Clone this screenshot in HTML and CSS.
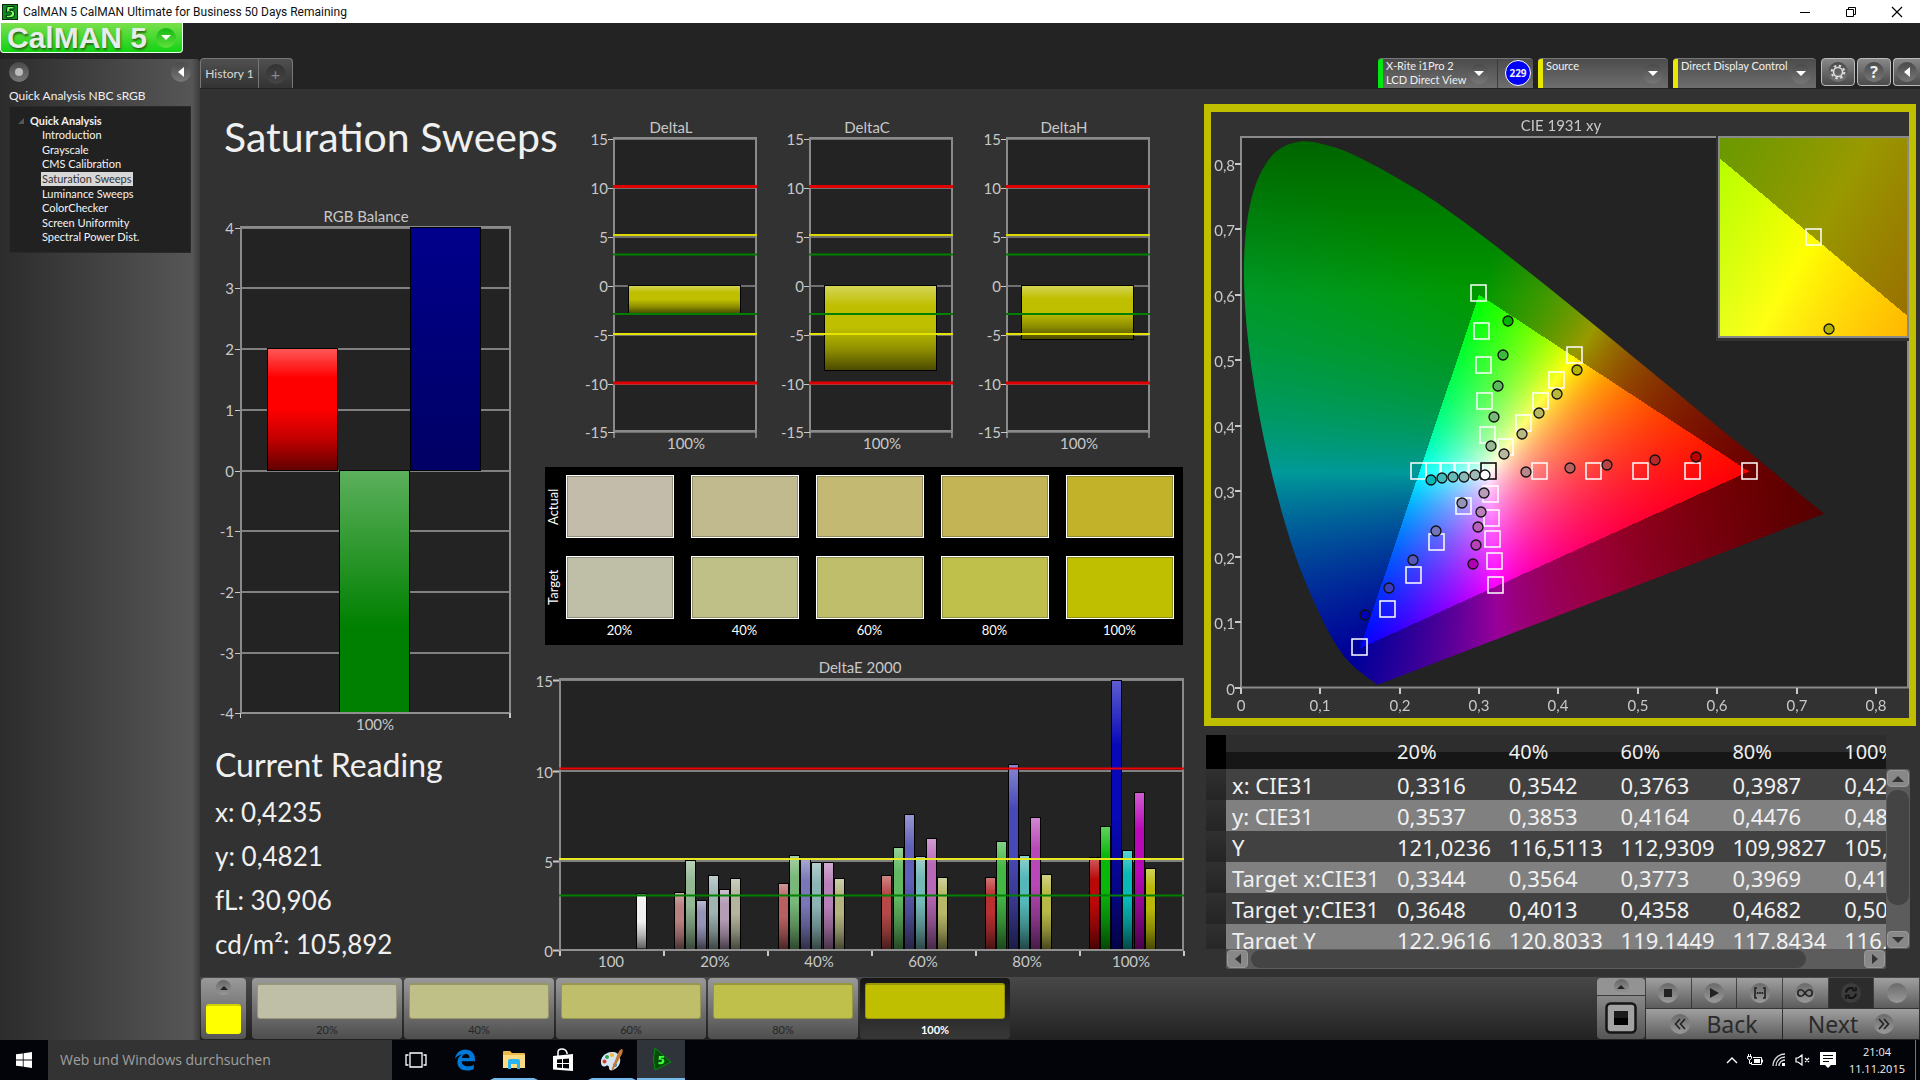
FILE: index.html
```html
<!DOCTYPE html>
<html lang="en">
<head>
<meta charset="utf-8">
<title>CalMAN 5 CalMAN Ultimate for Business</title>
<link rel="stylesheet" href="styles.css">
</head>
<body>
<header class="titlebar">
  <svg class="app-icon" width="16" height="16" viewBox="0 0 16 16"><rect width="16" height="16" fill="#0a2a0a"/><rect x="1" y="1" width="14" height="14" fill="#0c8c1c"/><path d="M12 2.500H5L4.300 8.500q4.200-1.800 5.200.500q.3 2.800-5.200 2.200v2.500q8.400 1 8.400-4.200q-.5-3.800-5-3.200l.2-1.300H12z" fill="#7dff5c" stroke="#021" stroke-width="1"/></svg>
  <span class="title-text">CalMAN 5 CalMAN Ultimate for Business 50 Days Remaining</span>
  <div class="window-buttons">
    <button aria-label="Minimize"><svg width="12" height="12" viewBox="0 0 12 12"><path d="M1 6.500h10" stroke="#000"/></svg></button>
    <button aria-label="Restore"><svg width="12" height="12" viewBox="0 0 12 12" fill="none" stroke="#000"><path d="M1.500 3.500h7v7h-7zM3.500 3.500v-2h7v7h-2"/></svg></button>
    <button aria-label="Close"><svg width="12" height="12" viewBox="0 0 12 12"><path d="M1 1l10 10M11 1L1 11" stroke="#000" stroke-width="1.200"/></svg></button>
  </div>
</header>

<div class="app">
  <div class="left">
    <button class="logo"><span>CalMAN 5</span><i class="round green"><b class="tri down"></b></i></button>
    <nav class="sidebar">
      <div class="side-top">
        <button class="round knob" aria-label="Pin"><i></i></button>
        <button class="round" aria-label="Collapse"><b class="tri left-tri"></b></button>
      </div>
      <h2>Quick Analysis NBC sRGB</h2>
      <div class="tree">
        <div class="tree-head"><svg width="6" height="6" viewBox="0 0 6 6"><path d="M6 0v6H0z" fill="#555"/></svg>Quick Analysis</div>
        <ul>
          <li><a href="#">Introduction</a></li>
          <li><a href="#">Grayscale</a></li>
          <li><a href="#">CMS Calibration</a></li>
          <li><a href="#" class="selected">Saturation Sweeps</a></li>
          <li><a href="#">Luminance Sweeps</a></li>
          <li><a href="#">ColorChecker</a></li>
          <li><a href="#">Screen Uniformity</a></li>
          <li><a href="#">Spectral Power Dist.</a></li>
        </ul>
      </div>
    </nav>
  </div>

  <div class="main">
    <div class="topbar">
      <div class="tabs">
        <button class="tab">History 1</button>
        <button class="tab add" aria-label="Add tab"><i class="round dim">+</i></button>
      </div>
      <div class="devices">
        <button class="device meter"><span class="strip on"></span><span class="dev-label">X-Rite i1Pro 2<br>LCD Direct View</span><i class="round"><b class="tri down"></b></i><span class="badge-cell"><span class="badge">229</span></span></button>
        <button class="device source"><span class="strip"></span><span class="dev-label">Source</span><i class="round"><b class="tri down"></b></i></button>
        <button class="device display"><span class="strip"></span><span class="dev-label">Direct Display Control</span><i class="round"><b class="tri down"></b></i></button>
        <button class="tool" aria-label="Settings"><i class="round"><svg width="16" height="16" viewBox="0 0 16 16" fill="none" stroke="#ddd"><circle cx="8" cy="8" r="4.500" stroke-width="1.600"/><circle cx="8" cy="8" r="6.300" stroke-width="2" stroke-dasharray="2.400 2.550"/></svg></i></button>
        <button class="tool" aria-label="Help"><i class="round">?</i></button>
        <button class="tool cut" aria-label="Collapse panel"><i class="round"><b class="tri left-tri"></b></i></button>
      </div>
    </div>

    <main class="workspace">
      <h1>Saturation Sweeps</h1>
      <svg class="chart rgb" id="rgb" viewBox="200 200 336 540"></svg>
      <section class="reading">
        <h2>Current Reading</h2>
        <p>x: 0,4235</p><p>y: 0,4821</p><p>fL: 30,906</p><p>cd/m²: 105,892</p>
      </section>
      <svg class="chart deltas" id="deltas" viewBox="536 89 654 372"></svg>
      <section class="swatches">
        <span class="side">Actual</span>
        <i class="a20"></i><i class="a40"></i><i class="a60"></i><i class="a80"></i><i class="a100"></i>
        <span class="side">Target</span>
        <i class="t20"></i><i class="t40"></i><i class="t60"></i><i class="t80"></i><i class="t100"></i>
        <span></span><span>20%</span><span>40%</span><span>60%</span><span>80%</span><span>100%</span>
      </section>
      <svg class="chart de" id="de" viewBox="536 655 654 322"></svg>
      <section class="right">
        <div class="cie">
          <canvas id="gamut" width="698" height="606"></canvas>
          <svg id="cie" viewBox="1211 112 698 606"></svg>
        </div>
        <div class="grid-box">
          <div class="table-clip">
            <table>
              <colgroup><col class="c-handle"><col class="c-name"><col><col><col><col><col></colgroup>
              <thead><tr><td></td><th></th><th>20%</th><th>40%</th><th>60%</th><th>80%</th><th>100%</th></tr></thead>
              <tbody>
                <tr><td></td><th>x: CIE31</th><td>0,3316</td><td>0,3542</td><td>0,3763</td><td>0,3987</td><td>0,4235</td></tr>
                <tr><td></td><th>y: CIE31</th><td>0,3537</td><td>0,3853</td><td>0,4164</td><td>0,4476</td><td>0,4821</td></tr>
                <tr><td></td><th>Y</th><td>121,0236</td><td>116,5113</td><td>112,9309</td><td>109,9827</td><td>105,</td></tr>
                <tr><td></td><th>Target x:CIE31</th><td>0,3344</td><td>0,3564</td><td>0,3773</td><td>0,3969</td><td>0,41</td></tr>
                <tr><td></td><th>Target y:CIE31</th><td>0,3648</td><td>0,4013</td><td>0,4358</td><td>0,4682</td><td>0,50</td></tr>
                <tr><td></td><th>Target Y</th><td>122,9616</td><td>120,8033</td><td>119,1449</td><td>117,8434</td><td>116,</td></tr>
              </tbody>
            </table>
          </div>
          <div class="scroll vertical"><button aria-label="Up"><b class="tri up"></b></button><i></i><button aria-label="Down"><b class="tri down"></b></button></div>
          <div class="scroll horizontal"><button aria-label="Left"><b class="tri left-tri"></b></button><i></i><button aria-label="Right"><b class="tri right-tri"></b></button></div>
        </div>
      </section>
    </main>

    <footer class="bottombar">
      <button class="mini" aria-label="Current color"><i class="round tiny"><b class="tri up"></b></i><span></span></button>
      <div class="steps">
        <button><i class="t20"></i>20%</button>
        <button><i class="t40"></i>40%</button>
        <button><i class="t60"></i>60%</button>
        <button><i class="t80"></i>80%</button>
        <button class="active"><i class="t100"></i>100%</button>
      </div>
      <div class="pattern">
        <button aria-label="Expand"><i class="round tiny"><b class="tri up"></b></i></button>
        <button aria-label="Pattern"><svg width="32" height="32" viewBox="0 0 32 32"><rect x="1.500" y="1.500" width="29" height="29" rx="4" fill="#a2a2a2" stroke="#151515" stroke-width="2.500"/><path d="M9 9h14v14H9z" fill="#000"/><path d="M9 9h14v7H9z" fill="#1c1c1c"/></svg></button>
      </div>
      <div class="transport">
        <button aria-label="Stop"><i class="round"><svg width="10" height="10"><path d="M1 1h8v8H1z" fill="#222"/></svg></i></button>
        <button aria-label="Play"><i class="round"><svg width="10" height="10"><path d="M1 0l9 5-9 5z" fill="#222"/></svg></i></button>
        <button aria-label="Series"><i class="round"><svg width="14" height="12" viewBox="0 0 14 12" fill="none" stroke="#222" stroke-width="1.600"><path d="M4 1H2v10h2M10 1h2v10h-2"/><path d="M3.800 6h1.600M6.200 6h1.600M8.600 6h1.600" stroke-width="2"/></svg></i></button>
        <button aria-label="Loop"><i class="round"><svg width="16" height="10" viewBox="0 0 16 10" fill="none" stroke="#222" stroke-width="1.600"><path d="M8 5C6 2 5 1.800 4 1.800a3.200 3.200 0 0 0 0 6.400c1 0 2-.200 4-3.200s3-3.200 4-3.200a3.200 3.200 0 0 1 0 6.400c-1 0-2-.200-4-3.200z"/></svg></i></button>
        <button class="pressed" aria-label="Refresh"><i class="round"><svg width="14" height="14" viewBox="0 0 14 14" fill="none" stroke="#111" stroke-width="2"><path d="M2 6.500a5 5 0 0 1 8-3.500M12 7.500a5 5 0 0 1-8 3.500"/><path d="M8 4.500h4V1M6 9.500H2V13" stroke-width="1.500"/></svg></i></button>
        <button aria-label="Record"><i class="round"></i></button>
        <button class="wide"><i class="round"><svg width="12" height="12" viewBox="0 0 12 12" fill="none" stroke="#222" stroke-width="1.600"><path d="M6 1L1.500 6 6 11M11 1L6.500 6 11 11"/></svg></i>Back</button>
        <button class="wide">Next<i class="round"><svg width="12" height="12" viewBox="0 0 12 12" fill="none" stroke="#222" stroke-width="1.600"><path d="M1 1l4.500 5L1 11M6 1l4.500 5L6 11"/></svg></i></button>
      </div>
    </footer>
  </div>
</div>

<footer class="taskbar">
  <button class="start" aria-label="Start"><svg width="16" height="16" viewBox="0 0 16 16" fill="#fff"><path d="M0 2.300L6.800 1.400v6.200H0zM7.600 1.300L16 0v7.600H7.600zM0 8.400h6.800v6.200L0 13.700zM7.600 8.400H16V16l-8.400-1.300z"/></svg></button>
  <input class="search" type="text" aria-label="Search" placeholder="Web und Windows durchsuchen">
  <div class="tasks">
    <button aria-label="Task view"><svg width="22" height="16" viewBox="0 0 22 16" fill="none" stroke="#fff" stroke-width="1.300"><path d="M5 1h12v14H5zM3.500 3H1v10h2.500M18.500 3H21v10h-2.500"/></svg></button>
    <button aria-label="Edge"><svg width="22" height="22" viewBox="0 0 22 22"><path d="M1 9.800C1.800 4 6 .5 11.200.5 17 .5 21 4.600 21 10v2.300H7.700c.1 3.600 3 5 6.200 5 2.200 0 4.300-.6 5.900-1.600v4.200c-2 1.100-4.300 1.600-6.800 1.600-6 0-9.600-3.300-9.600-8.500 0-3.200 1.800-5.900 4.800-7.400C4.800 6 2.500 7.500 1 9.800zM7.900 9h7.600c0-2.700-1.400-4.100-3.600-4.100C9.700 4.900 8.200 6.500 7.900 9z" fill="#0078d7"/></svg></button>
    <button class="open" aria-label="Explorer"><svg width="22" height="20" viewBox="0 0 22 20"><path d="M0 2q0-1 1-1h6l2 2h12q1 0 1 1v14H0z" fill="#e9b949"/><path d="M0 5h22v13H0z" fill="#fbdc83"/><path d="M5 19v-8q0-2 2-2h8q2 0 2 2v8h-3v-5H8v5z" fill="#29b3f2"/></svg></button>
    <button aria-label="Store"><svg width="22" height="24" viewBox="0 0 22 24"><path d="M1 8l20-2v17L1 21.500z" fill="#fff"/><path d="M6 8V4q0-3 4-3t5 4v1" fill="none" stroke="#fff" stroke-width="1.500"/><path d="M5 11.500l5-.5v4H5zM11 11l6-.6V15h-6zM5 16h5v4l-5-.4zM11 16h6v4.600l-6-.6z" fill="#03050a"/></svg></button>
    <button class="open" aria-label="Paint"><svg width="24" height="24" viewBox="0 0 24 24"><path d="M11 4C4 5 .5 10 1 15c.5 4 3 4 5 3 2-1 3 0 3 2 0 3 3 3 6 1 4-2 6-7 5-11-1-5-5-6.500-9-6z" fill="#d5e6f3"/><circle cx="7" cy="9" r="2" fill="#2fa84f"/><circle cx="12" cy="7" r="2" fill="#f2b92b"/><circle cx="4.500" cy="13.500" r="2" fill="#dc3c2c"/><circle cx="15" cy="17" r="2" fill="#357fd1"/><path d="M22 1q1.500 1 0 5L13 22l-1.500-.5L18 5q2-4 4-4z" fill="#c27a35"/></svg></button>
    <button class="open current" aria-label="CalMAN"><svg width="22" height="24" viewBox="0 0 22 24"><path d="M5 1l16 14-16 8q-3-11 0-22z" fill="#064d0a" stroke="#0a8c16"/><path d="M14 9H9l-.4 4q3-1 3.500.6 0 2-3.700 1.400v2q6 1 6-3.200-.5-2.500-3.500-2.200l.1-.8h3z" fill="#3dff3d"/></svg></button>
  </div>
  <div class="tray">
    <svg width="12" height="8" viewBox="0 0 12 8" fill="none" stroke="#fff" stroke-width="1.400"><path d="M1 7l5-5 5 5"/></svg>
    <svg width="16" height="12" viewBox="0 0 16 12" fill="none" stroke="#fff"><path d="M6 3.500h8.500v7h-10V8M15.500 5.500v3M1.500 0v2.500M3.500 0v2.500M.5 2.500h4v2l-2 1.500-2-1.500zM2.500 6v3.500h2"/><path d="M7 5h6v4H7z" fill="#fff" stroke="none"/></svg>
    <svg width="14" height="14" viewBox="0 0 14 14" fill="none" stroke="#ddd" stroke-width="1.300"><path d="M1 13A12 12 0 0 1 13 1M4 13a9 9 0 0 1 9-9M7 13a6 6 0 0 1 6-6"/><path d="M10 10h3v3h-3z" fill="#fff" stroke="none"/></svg>
    <svg width="16" height="12" viewBox="0 0 16 12" fill="none" stroke="#fff" stroke-width="1.200"><path d="M1 4h2l4-3v10L3 8H1zM10 4l4 4M14 4l-4 4"/></svg>
    <svg width="16" height="16" viewBox="0 0 16 16"><path d="M0 0h16v13h-5l-3 3-3-3H0z" fill="#fff"/><path d="M3 3.500h10M3 6.500h10M3 9.500h6" stroke="#03050a" stroke-width="1.200"/></svg>
    <time>21:04<br>11.11.2015</time>
    <span class="desk-line"></span>
  </div>
</footer>
<script src="charts.js"></script>
</body>
</html>
```
FILE: styles.css
```css
* { box-sizing: border-box; }
html, body { height: 100%; }
body {
  margin: 0;
  display: flex;
  flex-direction: column;
  overflow: hidden;
  background: #232323;
  color: #f0f0f0;
  font: 13px/15px Lato, "Liberation Sans", sans-serif;
}
button {
  margin: 0;
  padding: 0;
  border: 0;
  background: none;
  color: inherit;
  font: inherit;
  display: flex;
  align-items: center;
  justify-content: center;
}
h1, h2, p, ul { margin: 0; padding: 0; font-weight: 400; list-style: none; }

/* Title bar */
.titlebar {
  flex: 0 0 23px;
  display: flex;
  align-items: center;
  gap: 5px;
  padding-left: 2px;
  background: #fff;
  color: #111;
  font: 12px/22px Roboto, "Noto Sans", sans-serif;
}
.window-buttons { margin-left: auto; display: flex; }
.window-buttons button { width: 46px; height: 22px; }

/* Shared bits */
.round {
  width: 20px;
  height: 20px;
  flex: none;
  border-radius: 50%;
  background: linear-gradient(#4a4a4a, #777);
  display: inline-flex;
  align-items: center;
  justify-content: center;
  font-style: normal;
}
.round.green { background: linear-gradient(#14b814, #60e03c); }
.round.dim { background: linear-gradient(#333, #454545); color: #888; font-size: 16px; }
.round.tiny { width: 15px; height: 15px; background: linear-gradient(#666, #999); }
.round.tiny .tri { color: #222; }
.tri { width: 0; height: 0; color: #fff; border: 5px solid transparent; }
.tri.down { border-top-color: currentColor; border-bottom: 0; }
.tri.up { border-bottom-color: currentColor; border-top: 0; border-width: 4px; border-top: 0; }
.tri.left-tri { border-right: 6px solid currentColor; border-left: 0; }
.tri.right-tri { border-left: 6px solid currentColor; border-right: 0; }

.app { flex: 1; min-height: 0; display: flex; }

/* Left side */
.left { flex: 0 0 200px; display: flex; flex-direction: column; gap: 6px; }
.logo {
  align-self: flex-start;
  width: 183px;
  height: 30px;
  gap: 9px;
  border: 1px solid #e8ffe8;
  border-top: 0;
  border-radius: 0 0 4px 4px;
  background: linear-gradient(#7be04c, #12d212);
  color: #e8ece8;
  font: bold 30px/28px "Liberation Sans", Arial, sans-serif;
  text-shadow: 1px 2px 2px #2a6a1a;
}
.sidebar {
  flex: 1;
  padding: 3px 9px 0 9px;
  border-radius: 0 4px 0 0;
  background: linear-gradient(90deg, #2c2c2c, #565656 96%, #3c3c3c);
}
.side-top { display: flex; justify-content: space-between; }
.knob i { width: 8px; height: 8px; border-radius: 50%; background: #bbb; }
.sidebar h2 { font-size: 13px; line-height: 18px; margin: 5px 0 1px; }
.sidebar h2, .tab, .device { font-size: 12px; }
.tree {
  height: 147px;
  padding: 6px 0 0 8px;
  background: #212121;
  border: 1px solid #2a2a2a;
  font-size: 11px;
}
.tree-head { display: flex; align-items: center; gap: 6px; font-weight: 700; line-height: 15px; }
.tree ul { height: 117px; display: grid; grid-auto-rows: 1fr; padding-left: 23px; }
.tree a { color: #f4f4f4; text-decoration: none; display: block; width: fit-content; padding: 0 1px; line-height: 14px; }
.tree a.selected { background: #d8d8d8; color: #333; }

/* Main */
.main { flex: 1; min-width: 0; display: flex; flex-direction: column; }
.topbar { flex: 0 0 66px; display: flex; justify-content: space-between; align-items: flex-end; padding-bottom: 1px; overflow: hidden; }
.tabs { display: flex; }
.tab {
  height: 30px;
  border: 1px solid #777;
  border-bottom: 0;
  border-radius: 4px 0 0 0;
  background: linear-gradient(#505050, #333);
  color: #d8d8d8;
  width: 59px;
  white-space: nowrap;
}
.tab.add { width: 34px; border-left: 0; border-radius: 0 4px 0 0; }
.devices { display: flex; gap: 5px; }
.device {
  height: 30px;
  align-items: stretch;
  justify-content: flex-start;
  border-top: 1px solid #777;
  border-radius: 4px 4px 0 0;
  background: linear-gradient(#4c4c4c, #6e6e6e);
  text-align: left;
  font-size: 11px;
  line-height: 14px;
  padding-right: 5px;
  white-space: nowrap;
}
.device .round { align-self: center; }
.device.meter { width: 155px; padding-right: 2px; }
.device.source { width: 130px; }
.device.display { width: 143px; }
.strip { flex: 0 0 5px; background: #e8e800; margin-right: 3px; border-radius: 3px 0 0 0; }
.strip.on { background: #00e810; }
.dev-label { flex: 1; min-width: 0; }
.badge-cell { margin-left: 8px; padding: 1px 0 0 7px; border-left: 1px solid #3c3c3c; }
.badge {
  display: block;
  width: 26px;
  height: 26px;
  border: 1px solid #fff;
  border-radius: 50%;
  background: #0000fa;
  font: bold 10px/24px "Open Sans", sans-serif;
  text-align: center;
}
.tool {
  width: 34px;
  height: 28px;
  margin-right: -3px;
  border: 1px solid #bbb;
  border-radius: 4px;
  background: linear-gradient(#888, #4a4a4a);
  font: bold 16px/20px "Open Sans", sans-serif;
}
.tool.cut { width: 27px; margin-right: 0; border-right: 0; border-radius: 4px 0 0 4px; }

.workspace {
  flex: 1;
  min-height: 0;
  display: grid;
  grid-template-columns: 336fr 40fr 614fr 730fr;
  grid-template-rows: 111fr 261fr 194fr 85fr 237fr;
  background: #323232;
}
.workspace > * { min-width: 0; min-height: 0; }
.chart { width: 100%; height: 100%; }
.workspace h1 { grid-area: 1 / 1 / 2 / 3; padding: 22px 0 0 24px; font-size: 41px; line-height: 52px; white-space: nowrap; }
.rgb { grid-area: 2 / 1 / 5 / 2; }
.reading { grid-area: 5 / 1 / 6 / 2; padding: 5px 0 0 15px; }
.reading h2 { font-size: 32px; line-height: 40px; margin-bottom: 5px; }
.reading p { font-size: 26px; line-height: 44px; }
.deltas { grid-area: 1 / 2 / 3 / 4; }
.de { grid-area: 4 / 2 / 6 / 4; }
.swatches {
  grid-area: 3 / 2 / 4 / 4;
  margin: 6px 7px 10px 9px;
  padding: 8px 1px 0 0;
  background: #000;
  display: grid;
  grid-template-columns: 12px repeat(5, 1fr);
  grid-template-rows: 63px 63px 14px;
  row-gap: 18px;
  text-align: center;
  color: #fff;
}
.swatches .side { writing-mode: vertical-rl; rotate: 180deg; line-height: 16px; }
.swatches i { margin: 0 8px 0 9px; border: 1px solid #fff; box-shadow: inset 0 0 0 1px rgba(80, 80, 60, .4); }
.swatches span:nth-child(n+13) { margin-top: -14px; line-height: 14px; }
.a20 { background: #c3bcaa; } .a40 { background: #c2ba8f; } .a60 { background: #c3b973; } .a80 { background: #c3b555; } .a100 { background: #c2b229; }
.t20 { background: #bfbfa7; } .t40 { background: #bfbf88; } .t60 { background: #bfbf6b; } .t80 { background: #bfbf4b; } .t100 { background: #bfbf00; }

.right { grid-area: 1 / 4 / 6 / 5; padding: 15px 4px 8px 14px; display: flex; flex-direction: column; gap: 9px; }
.cie { flex: 1; min-height: 0; border: solid #bfbf00; border-width: 8px 7px; display: grid; grid-template: minmax(0, 1fr) / minmax(0, 1fr); }
.cie > * { grid-area: 1 / 1; width: 100%; height: 100%; object-fit: contain; }

svg text { font-family: Lato, "Liberation Sans", sans-serif; font-size: 15px; fill: #c8c8c8; }

/* Data table */
.grid-box { flex: 0 0 234px; margin: 0 6px 0 2px; display: grid; grid-template: 34px 180px 20px / 20px minmax(0, 1fr) 24px; }
.table-clip { grid-area: 1 / 1 / 3 / 3; overflow: hidden; }
table { table-layout: fixed; width: 744px; border-collapse: collapse; font: 22px/30px "Noto Sans", "Open Sans", sans-serif; }
.c-handle { width: 20px; }
.c-name { width: 165px; }
th, td { padding: 0 0 0 6px; text-align: left; font-weight: 400; white-space: nowrap; height: 31px; }
thead th { height: 34px; font-size: 20px; background: linear-gradient(#2d2d2d 50%, #161616 50%); }
thead td { background: #000; }
tbody tr { background: #414141; }
tbody tr:nth-child(even) { background: #808080; }
tbody td:first-child { background: linear-gradient(#303030, #242424); }
.scroll { display: flex; background: #5c5c5c; border-radius: 3px; padding: 1px; gap: 3px; }
.scroll i { background: #444; border-radius: 10px; }
.scroll button { flex: none; background: #888; border: 1px solid #999; border-radius: 4px; }
.scroll .tri { color: #333; }
.vertical { grid-area: 2 / 3; flex-direction: column; justify-content: space-between; }
.vertical button { height: 17px; }
.vertical .tri { border-width: 6px; }
.vertical .up { border-top: 0; }
.vertical .down { border-bottom: 0; }
.vertical i { flex: 0 0 115px; margin-bottom: auto; }
.horizontal { grid-area: 3 / 2; }
.horizontal button { width: 21px; }
.horizontal i { flex: 0 0 555px; margin-right: auto; }

/* Bottom bar */
.bottombar { flex: 0 0 63px; padding: 1px; display: flex; background: linear-gradient(#484848, #222); }
.mini { width: 45px; flex-direction: column; justify-content: space-between; padding: 2px 5px 5px; border-radius: 4px; background: linear-gradient(#999, #555); }
.mini span { width: 35px; height: 30px; border-radius: 3px; background: #ff0; border-top: 2px solid #d2d200; }
.steps { display: flex; gap: 2px; margin-left: 6px; }
.steps button {
  width: 150px;
  flex-direction: column;
  justify-content: flex-start;
  gap: 3px;
  padding: 5px 5px 0;
  border-radius: 4px;
  background: linear-gradient(#999, #4e4e4e);
  color: #262626;
  font-size: 11px;
}
.steps i { width: 100%; height: 36px; border-radius: 3px; border: 1px solid rgba(60, 60, 30, .3); border-top-width: 2px; flex: none; }
.steps .active { background: linear-gradient(#161616, #383838); color: #fff; font-weight: 700; }
.pattern { margin-left: auto; width: 48px; display: flex; flex-direction: column; gap: 1px; }
.pattern button { height: 17px; border-radius: 4px 4px 0 0; background: #939393; }
.pattern button + button { flex: 1; border-radius: 0 0 4px 4px; background: linear-gradient(#888, #555); }
.transport { margin-left: 1px; width: 273px; display: grid; grid-template-columns: repeat(6, 1fr); gap: 1px; }
.transport button { height: 30px; background: linear-gradient(#a0a0a0, #5c5c5c); color: #2a2a2a; }
.transport .round { background: linear-gradient(#6a6a6a, #9a9a9a); }
.transport .pressed { background: #2c2c2c; }
.transport .pressed .round { background: #3c3c3c; }
.transport .wide { grid-column: span 3; gap: 16px; font: 23px/28px "Noto Sans", sans-serif; }

/* Taskbar */
.taskbar { flex: 0 0 40px; display: flex; background: #02040a; font: 11px/17px "Open Sans", "Noto Sans", sans-serif; }
.start { width: 48px; }
.search { width: 344px; border: 0; padding: 0 12px; background: #333; color: #aaa; font: 14px/20px "Open Sans", sans-serif; }
.search::placeholder { color: #a0a0a0; opacity: 1; }
.tasks { display: flex; gap: 1px; }
.tasks button { width: 48px; border: solid transparent; border-width: 2px 4px; }
.tasks .open { border-bottom-color: #76b9ed; }
.tasks .current { border-left: 0; border-right: 0; border-top: 0; background: #2f343a; }
.tray { margin-left: auto; display: flex; align-items: center; gap: 9px; }
.tray time { text-align: center; margin: 0 1px 0 4px; }
.desk-line { width: 5px; height: 40px; border-left: 1px solid #777; }
```
FILE: charts.js
```javascript
const NS = 'http://www.w3.org/2000/svg';

function add(parent, name, attrs, text) {
  const el = document.createElementNS(NS, name);
  for (const key in attrs) el.setAttribute(key, attrs[key]);
  if (text !== undefined) el.textContent = text;
  parent.appendChild(el);
  return el;
}
function line(svg, x1, y1, x2, y2, stroke, width = 2) {
  add(svg, 'line', { x1, y1, x2, y2, stroke, 'stroke-width': width });
}
function label(svg, x, y, text, anchor = 'middle') {
  add(svg, 'text', { x, y, 'text-anchor': anchor }, text);
}

let gradientCount = 0;
function gradient(svg, stops) {
  const id = 'g' + (++gradientCount);
  const g = add(svg, 'linearGradient', { id, x1: 0, y1: 0, x2: 0, y2: 1 });
  stops.forEach(([offset, color]) => add(g, 'stop', { offset, 'stop-color': color }));
  return `url(#${id})`;
}
function mix(hex, target, t) {
  const n = parseInt(hex.slice(1), 16);
  const c = [n >> 16, (n >> 8) & 255, n & 255].map(v => Math.round(v + (target - v) * t));
  return `rgb(${c})`;
}
function glossy(svg, color) {
  return gradient(svg, [[0, mix(color, 255, 0.35)], [0.24, color], [0.5, color], [0.75, mix(color, 0, 0.25)], [1, mix(color, 0, 0.62)]]);
}
function bar(svg, x, y, w, h, fill) {
  add(svg, 'rect', { x, y, width: w, height: h, fill, stroke: '#000', 'stroke-width': 1 });
}
function frame(svg, x, y, w, h) {
  add(svg, 'rect', { x, y, width: w, height: h, fill: 'none', stroke: '#8a8a8a', 'stroke-width': 2 });
}

// RGB balance
(function () {
  const svg = document.getElementById('rgb');
  add(svg, 'rect', { x: 240, y: 226, width: 270, height: 487, fill: '#232323' });
  label(svg, 366, 222, 'RGB Balance');
  for (let v = 4; v >= -4; v--) {
    const y = Math.round(470.500 - 60.700 * v);
    line(svg, 235, y + 0.500, 241, y + 0.500, '#c8c8c8', 1);
    line(svg, 241, y, 510, y, '#808080');
    label(svg, 234, y + 6, v, 'end');
  }
  frame(svg, 241, 227, 269, 486);
  bar(svg, 267.500, 348.500, 70, 122, glossy(svg, '#ff0000'));
  bar(svg, 339.500, 470.500, 70, 242, gradient(svg, [[0, '#5cb05c'], [0.650, '#008000'], [1, '#008000']]));
  bar(svg, 410.500, 227.500, 70, 243, gradient(svg, [[0, '#00008c'], [1, '#000064']]));
  line(svg, 241, 713, 510, 713, '#909090');
  line(svg, 240.500, 713, 240.500, 718, '#c8c8c8', 1);
  line(svg, 510, 713, 510, 718, '#c8c8c8');
  label(svg, 375, 730, '100%');
})();

// Delta L / C / H
(function () {
  const svg = document.getElementById('deltas');
  [['DeltaL', 614, 313], ['DeltaC', 810, 370], ['DeltaH', 1007, 339]].forEach(([name, x, bottom]) => {
    add(svg, 'rect', { x, y: 138, width: 142, height: 294, fill: '#232323' });
    label(svg, x + 57, 133, name);
    for (let v = 15; v >= -15; v -= 5) {
      const y = v === -15 ? 432 : Math.round(286 - 9.800 * v);
      line(svg, x - 6, y + 0.500, x, y + 0.500, '#c8c8c8', 1);
      line(svg, x, y, x + 142, y, '#707070');
      label(svg, x - 6, y + 6, v, 'end');
    }
    frame(svg, x, 138, 142, 293);
    bar(svg, x + 14.500, 285.500, 112, bottom - 285, glossy(svg, '#bfbf00'));
    [[186.500, '#e00000', 3], [235, '#d8d800', 2], [254.500, '#008000', 2], [314, '#008000', 2], [334, '#e4e400', 2], [383, '#e00000', 3]]
      .forEach(([y, color, w]) => line(svg, x - 1, y, x + 143, y, color, w));
    line(svg, x, 432, x, 438, '#c8c8c8', 1);
    line(svg, x + 142, 432, x + 142, 438, '#c8c8c8', 1);
    label(svg, x + 72, 449, '100%');
  });
})();

// Delta E 2000
(function () {
  const svg = document.getElementById('de');
  add(svg, 'rect', { x: 560, y: 679, width: 624, height: 271, fill: '#232323' });
  label(svg, 860, 673, 'DeltaE 2000');
  [[15, 680], [10, 771], [5, 861], [0, 950]].forEach(([v, y]) => {
    line(svg, 553, y + 0.500, 560, y + 0.500, '#c8c8c8');
    line(svg, 560, y, 1184, y, '#808080');
    label(svg, 553, y + 7, v, 'end');
  });
  frame(svg, 560, 679, 623, 271);
  bar(svg, 636.500, 894, 10, 55, glossy(svg, '#f0f0f0'));
  const colors = [
    ['#b88080', '#94b894', '#9494b8', '#a0b4b4', '#b49cb4', '#b4b49c'],
    ['#b86060', '#78b878', '#7878b8', '#8cb4b4', '#b880b8', '#b4b480'],
    ['#b84848', '#60b860', '#6060b8', '#74b8b8', '#b868b8', '#b8b868'],
    ['#b83030', '#44b844', '#4848b8', '#54b8b8', '#b848b8', '#b8b848'],
    ['#b80808', '#0ab80a', '#0808b8', '#08b8b8', '#b808b8', '#b8b808']
  ];
  const tops = [
    [892, 860, 900, 875, 889, 878],
    [883, 855, 859, 862, 862, 878],
    [875, 847, 814, 856, 838, 877],
    [877, 841, 764, 855, 817, 874],
    [857, 826, 680, 850, 792, 868]
  ];
  tops.forEach((group, i) => group.forEach((top, j) => {
    bar(svg, Math.round(674 + 103.700 * i + 11.200 * j) + 0.500, top + 0.500, 10, 949 - top, glossy(svg, colors[i][j]));
  }));
  line(svg, 560, 950, 1184, 950, '#909090');
  line(svg, 559, 768.500, 1184, 768.500, '#f00000');
  line(svg, 559, 859, 1184, 859, '#e8e820');
  line(svg, 559, 895.500, 1184, 895.500, '#008000');
  ['100', '20%', '40%', '60%', '80%', '100%'].forEach((t, i) => label(svg, 611 + 104 * i, 967, t));
  for (let i = 0; i < 7; i++) line(svg, 560 + 104 * i, 951, 560 + 104 * i, 956, '#c8c8c8');
})();

// CIE 1931 chromaticity diagram
(function () {
  const ox = 1241, oy = 687.500, sx = 793.600, sy = 654.800;
  const svg = document.getElementById('cie');
  const canvas = document.getElementById('gamut');
  const ctx = canvas.getContext('2d');

  // Linear RGB scaled to its largest channel, dimmed outside the sRGB triangle
  function color(x, y) {
    const X = x / y, Z = (1 - x - y) / y;
    let rgb = [
      3.2406 * X - 1.5372 - 0.4986 * Z,
      -0.9689 * X + 1.8758 + 0.0415 * Z,
      0.0557 * X - 0.2040 + 1.0570 * Z
    ];
    const inside = Math.min(...rgb) >= 0;
    rgb = rgb.map(v => Math.max(0, v));
    const max = Math.max(...rgb);
    const f = inside ? 1 : 0.600 - Math.max(0, x - 0.450) * 0.950 - Math.max(0, y - 0.600) * 0.870;
    return rgb.map(v => 255 * f * v / max);
  }
  function paint(left, top, w, h, toXY) {
    const layer = document.createElement('canvas');
    layer.width = w;
    layer.height = h;
    const lctx = layer.getContext('2d');
    const img = lctx.createImageData(w, h);
    for (let j = 0; j < h; j++) for (let i = 0; i < w; i++) {
      const [x, y] = toXY(left + i + 0.500, top + j + 0.500);
      const c = color(x, Math.max(y, 0.001));
      const k = 4 * (j * w + i);
      img.data[k] = c[0]; img.data[k + 1] = c[1]; img.data[k + 2] = c[2]; img.data[k + 3] = 255;
    }
    lctx.putImageData(img, 0, 0);
    ctx.drawImage(layer, left, top);
  }

  const locus = [[.1741,.0050],[.1714,.0051],[.1644,.0109],[.1566,.0177],[.1440,.0297],[.1355,.0399],[.1241,.0578],[.1096,.0868],[.0913,.1327],[.0687,.2007],[.0454,.2950],[.0235,.4127],[.0082,.5384],[.0039,.6548],[.0139,.7502],[.0389,.8120],[.0743,.8338],[.1142,.8262],[.1547,.8059],[.2296,.7543],[.3016,.6923],[.3731,.6245],[.4441,.5547],[.5125,.4866],[.5752,.4242],[.6270,.3725],[.6658,.3340],[.6915,.3083],[.7190,.2809],[.7347,.2653]]
    .map(([x, y]) => [ox + sx * x, oy - sy * y]);

  ctx.translate(-1211, -112);
  ctx.fillStyle = '#232323';
  ctx.fillRect(1241, 137, 667, 550);
  ctx.save();
  ctx.beginPath();
  ctx.moveTo(...locus[0]);
  // Catmull-Rom through the spectral samples
  for (let i = 0; i < locus.length - 1; i++) {
    const p0 = locus[Math.max(0, i - 1)], p1 = locus[i], p2 = locus[i + 1], p3 = locus[Math.min(locus.length - 1, i + 2)];
    ctx.bezierCurveTo(p1[0] + (p2[0] - p0[0]) / 6, p1[1] + (p2[1] - p0[1]) / 6,
      p2[0] - (p3[0] - p1[0]) / 6, p2[1] - (p3[1] - p1[1]) / 6, p2[0], p2[1]);
  }
  ctx.closePath();
  ctx.clip();
  paint(1241, 137, 667, 550, (px, py) => [(px - ox) / sx, (oy - py) / sy]);
  ctx.restore();
  ctx.fillStyle = '#323232';
  ctx.fillRect(1716, 135, 194, 206);
  paint(1719, 137, 190, 201, (px, py) => [0.4193 + (px - 1813.500) / 3800, 0.5053 - (py - 237) / 4017]);

  label(svg, 1561, 131, 'CIE 1931 xy');
  add(svg, 'path', { d: 'M1716 137H1241V687.500H1908V341', fill: 'none', stroke: '#8a8a8a', 'stroke-width': 2 });
  frame(svg, 1719, 137, 189, 200);
  for (let i = 0; i <= 8; i++) {
    const text = i ? '0,' + i : '0';
    const x = Math.round(ox + sx * i / 10), y = Math.round(oy - sy * i / 10);
    line(svg, x, 688, x, 694, '#c8c8c8');
    label(svg, x, 711, text);
    line(svg, 1235, y, 1241, y, '#c8c8c8');
    label(svg, 1235, y + 7, text, 'end');
  }

  const targets = [
    [1478,293],[1481,331],[1483,365],[1484,401],[1487,435],
    [1574,355],[1556,380],[1540,401],[1523,423],[1505,447],
    [1418,471],[1433,471],[1447,471],[1461,471],[1475,471],
    [1539,471],[1593,471],[1640,471],[1692,471],[1749,471],
    [1490,494],[1491,518],[1492,539],[1494,561],[1495,585],
    [1463,506],[1436,542],[1413,575],[1387,609],[1359,647],
    [1813,237]
  ];
  function square([x, y], stroke) {
    add(svg, 'rect', { x: x - 7, y: y - 8, width: 15, height: 16, fill: 'none', stroke, 'stroke-width': 1.500 });
  }
  targets.forEach(p => square(p, '#fff'));
  square([1488, 471], '#000');

  const measured = [
    [1508,321,'#00b400'],[1503,355,'#3cb83c'],[1498,386,'#5cb85c'],[1494,417,'#78b878'],[1491,446,'#98b898'],
    [1577,370,'#b4b400'],[1557,394,'#b8b83c'],[1539,413,'#b8b860'],[1522,434,'#b8b880'],[1504,454,'#b8b89c'],
    [1431,480,'#00b8b8'],[1442,478,'#44b8b8'],[1453,477,'#68b8b8'],[1464,477,'#88b8b8'],[1475,475,'#a0b8b8'],
    [1485,475,'#ffffff'],
    [1526,472,'#b88888'],[1570,468,'#b86060'],[1607,465,'#b84444'],[1655,460,'#b82828'],[1696,457,'#b80000'],
    [1484,493,'#b89cb8'],[1481,512,'#b880b8'],[1478,527,'#b860b8'],[1476,545,'#b840b8'],[1473,564,'#b400b4'],
    [1462,503,'#9494b8'],[1436,531,'#7474b8'],[1413,560,'#5858b8'],[1389,588,'#3c3cb8'],[1365,615,'#0000b4'],
    [1829,329,'#b4b400']
  ];
  measured.forEach(([cx, cy, fill]) => add(svg, 'circle', { cx, cy, r: 5, fill, stroke: '#111', 'stroke-width': 1.300 }));
})();
```
